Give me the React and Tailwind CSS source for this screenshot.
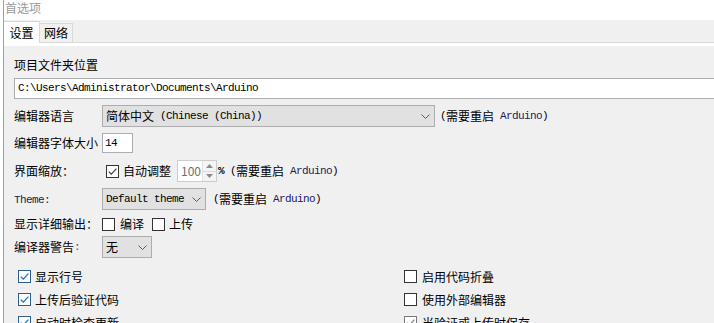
import React from "react";

function M({ children, className = "" }) {
  return (
    <span className={"font-['Liberation_Mono',monospace] text-[11px] tracking-[-0.6px] whitespace-pre " + className}>
      {children}
    </span>
  );
}

function Chevron() {
  return (
    <svg width="9" height="5" viewBox="0 0 9 5" className="shrink-0">
      <path d="M0.5 0.5 L4.5 4.5 L8.5 0.5" fill="none" stroke="#5a5a5a" strokeWidth="1" />
    </svg>
  );
}

function Box({ checked = false, tone = "dark" }) {
  const border = tone === "blue" ? "border-[#2f5f8f]" : tone === "gray" ? "border-[#7a7a7a]" : "border-[#333333]";
  const stroke = tone === "blue" ? "#1f72c8" : tone === "gray" ? "#8a8a8a" : "#444444";
  return (
    <div className={"w-[13px] h-[13px] shrink-0 bg-white border flex items-center justify-center " + border}>
      {checked && (
        <svg width="11" height="11" viewBox="0 0 11 11">
          <path d="M1.8 5.6 L4.3 8.1 L9.4 2.6" fill="none" stroke={stroke} strokeWidth="1.3" />
        </svg>
      )}
    </div>
  );
}

function Select({ w, children }) {
  return (
    <div className={"h-full shrink-0 border border-[#adadad] bg-[#e1e1e1] flex items-center justify-between pl-[3px] pr-[4px] " + w}>
      <div className="flex items-center leading-none">{children}</div>
      <Chevron />
    </div>
  );
}

function Restart({ className = "" }) {
  return (
    <div className={"flex items-center leading-none " + className}>
      <M>(</M>
      <span>需要重启</span>
      <M className="text-[#1a1a60]"> Arduino</M>
      <M>)</M>
    </div>
  );
}

export default function App() {
  return (
    <div className="w-[714px] h-[323px] overflow-hidden bg-white flex font-['Noto_Sans_CJK_SC',sans-serif] text-[12px] text-black">
      <div className="w-[3px] shrink-0 bg-white" />
      <div className="flex-1 min-w-0 flex flex-col border-l border-[#a0a0a0]">
        <div className="h-[20px] shrink-0 bg-white pl-[1px] pt-[1px] text-[#9a9a9a] leading-[14px]">首选项</div>
        <div className="h-[23px] shrink-0 bg-[#f0f0f0] flex items-end border-b border-[#d9d9d9]">
          <div className="w-[36px] h-[22px] -mb-px bg-white border-t border-r border-[#d9d9d9] flex items-center justify-center leading-none z-10">
            设置
          </div>
          <div className="w-[33px] h-[19px] bg-[#f0f0f0] border-t border-r border-[#d9d9d9] flex items-center justify-center leading-none">
            网络
          </div>
        </div>
        <div className="flex-1 bg-[#f0f0f0] border-t-[3px] border-white pt-[9px] pl-[10px] flex flex-col">
          <div className="h-[20px] flex items-center leading-none">项目文件夹位置</div>
          <div className="mt-[3px] h-[21px] w-[760px] shrink-0 bg-white border border-[#abadb3] flex items-center pl-[3px] leading-none">
            <M>C:\Users\Administrator\Documents\Arduino</M>
          </div>

          <div className="mt-[6px] h-[22px] flex items-center">
            <div className="w-[88px] shrink-0 leading-none">编辑器语言</div>
            <Select w="w-[333px]">
              <span>简体中文</span>
              <M> (Chinese (China))</M>
            </Select>
            <Restart className="ml-[5px]" />
          </div>

          <div className="mt-[6px] h-[20px] flex items-center">
            <div className="w-[88px] shrink-0 leading-none">编辑器字体大小</div>
            <div className="w-[31px] h-full bg-white border border-[#abadb3] flex items-center pl-[2px] leading-none">
              <M>14</M>
            </div>
          </div>

          <div className="mt-[7px] h-[22px] flex items-center">
            <div className="w-[92px] shrink-0 leading-none">界面缩放：</div>
            <Box checked tone="dark" />
            <span className="ml-[4px] leading-none">自动调整</span>
            <div className="ml-[6px] w-[40px] h-full bg-white border border-[#cccccc] flex items-stretch">
              <div className="flex-1 flex items-center pl-[3px] text-[#6d6d6d] leading-none">100</div>
              <div className="w-[14px] flex flex-col border-l border-[#e3e3e3] bg-[#f4f4f4]">
                <div className="flex-1 flex items-center justify-center border-b border-[#dadada]">
                  <svg width="7" height="4" viewBox="0 0 7 4"><path d="M0 4 L3.5 0 L7 4 Z" fill="#8a8a8a" /></svg>
                </div>
                <div className="flex-1 flex items-center justify-center">
                  <svg width="7" height="4" viewBox="0 0 7 4"><path d="M0 0 L3.5 4 L7 0 Z" fill="#8a8a8a" /></svg>
                </div>
              </div>
            </div>
            <M className="ml-[1px] font-bold">% </M>
            <Restart />
          </div>

          <div className="mt-[6px] h-[22px] flex items-center">
            <div className="w-[88px] shrink-0 leading-none">
              <M className="text-[#1a1a50]">Theme:</M>
            </div>
            <Select w="w-[104px]">
              <M>Default theme</M>
            </Select>
            <Restart className="ml-[7px]" />
          </div>

          <div className="mt-[5px] h-[18px] flex items-center">
            <div className="w-[88px] shrink-0 leading-none">显示详细输出：</div>
            <Box />
            <span className="ml-[5px] leading-none">编译</span>
            <div className="ml-[8px]"><Box /></div>
            <span className="ml-[4px] leading-none">上传</span>
          </div>

          <div className="mt-[3px] h-[22px] flex items-center">
            <div className="w-[88px] shrink-0 flex items-center leading-none">
              <span>编译器警告</span>
              <M className="text-[#5a3a8a]">:</M>
            </div>
            <Select w="w-[50px]">
              <span>无</span>
            </Select>
          </div>

          <div className="mt-[7px] pl-[4px] grid grid-cols-[386px_1fr]">
            <div className="h-[23px] flex items-center"><Box checked tone="blue" /><span className="ml-[4px] leading-none">显示行号</span></div>
            <div className="h-[23px] flex items-center"><Box /><span className="ml-[5px] leading-none">启用代码折叠</span></div>
            <div className="h-[23px] flex items-center"><Box checked tone="blue" /><span className="ml-[4px] leading-none">上传后验证代码</span></div>
            <div className="h-[23px] flex items-center"><Box /><span className="ml-[5px] leading-none">使用外部编辑器</span></div>
            <div className="h-[23px] flex items-center"><Box checked tone="blue" /><span className="ml-[4px] leading-none">启动时检查更新</span></div>
            <div className="h-[23px] flex items-center"><Box checked tone="gray" /><span className="ml-[5px] leading-none">当验证或上传时保存</span></div>
          </div>
        </div>
      </div>
    </div>
  );
}
